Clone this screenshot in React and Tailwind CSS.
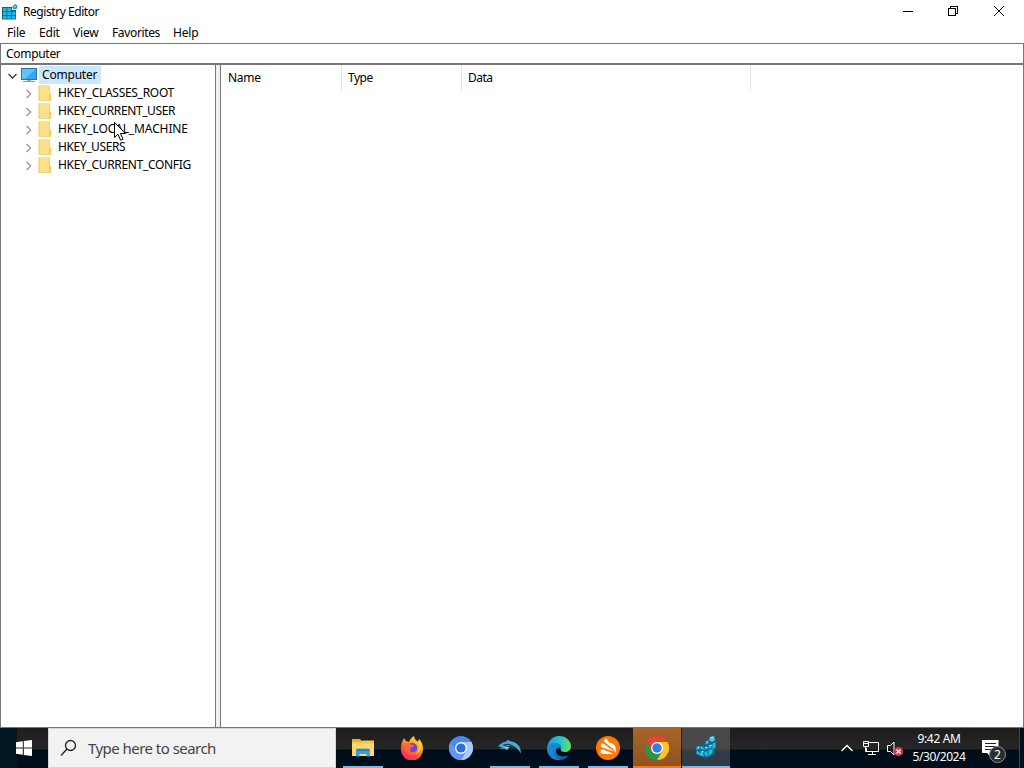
import React from 'react';

const menus = [
  { label: 'File', className: 'w-8' },
  { label: 'Edit', className: 'w-[34px]' },
  { label: 'View', className: 'w-[39px]' },
  { label: 'Favorites', className: 'w-[61px] tracking-[-0.36px]' },
  { label: 'Help', className: 'w-10' },
];

const hives = [
  { label: 'HKEY_CLASSES_ROOT', className: 'tracking-[-0.29px]' },
  { label: 'HKEY_CURRENT_USER', className: 'tracking-[-0.39px]' },
  { label: 'HKEY_LOCAL_MACHINE', className: 'tracking-[-0.12px]' },
  { label: 'HKEY_USERS', className: 'tracking-[-0.4px]' },
  { label: 'HKEY_CURRENT_CONFIG', className: 'tracking-[-0.33px]' },
];

const RegistryIcon = () => (
  <svg width="16" height="16" viewBox="0 0 16 16" className="shrink-0">
    <path d="M0 3h10v3h4v9.500H0z" fill="#12627f" />
    <path d="M1 4h3.500v3H1zM5.300 4h3.900v3H5.300zM1 7.800h3.500v3.200H1zM5.300 7.800h3.900v3.200H5.300zM10 7.800h3.400v3.200H10zM1 11.800h3.500v3H1zM5.300 11.800h3.900v3H5.300zM10 11.800h3.400v3H10z" fill="#24b4e8" />
    <path d="M12.500 0l3 1.600-.5 3-3 .9-1.800-2.200z" fill="#238fb5" />
    <path d="M12.600 1.200l1.600.9-1 1.800-1.600-.7z" fill="#7bdcf6" />
  </svg>
);

const ComputerIcon = () => (
  <svg width="18" height="16" viewBox="0 0 18 16" className="shrink-0">
    <path d="M1 1h16v12H1z" fill="#2477aa" />
    <path d="M2 2h14v10H2z" fill="#35a8ed" />
    <path d="M2 2h14L5 12H2z" fill="#62c3f7" />
    <path d="M7 13h4v1H7z" fill="#9bacb5" />
    <path d="M3 14h12v1H3z" fill="#849aa5" />
  </svg>
);

const FolderIcon = () => (
  <svg width="14" height="16" viewBox="0 0 14 16" className="shrink-0">
    <path d="M.5.500h11.500V9h1.200v6.800H.5z" fill="#e9c559" />
    <path d="M1.500 1h10v14.200h-10z" fill="#ffe08a" />
    <path d="M11 10l1.500-.8v6H10.500z" fill="#f6d264" />
  </svg>
);

const FileExplorerIcon = () => (
  <svg width="24" height="24" viewBox="0 0 24 24">
    <path d="M1 3h8l2 2h11v15H1z" fill="#e9a91c" />
    <path d="M1 7h22v13H1z" fill="#ffd970" />
    <path d="M1 5.500h9l2-1h11v3H1z" fill="#f7c64a" />
    <path d="M5 20.500V14q0-1.500 1.500-1.500h11q1.500 0 1.500 1.500v6.500h-3.500V18h-7v2.500z" fill="#3a9fd8" />
    <path d="M6 13.500h12V15H6z" fill="#237bb4" />
  </svg>
);

const FirefoxIcon = () => (
  <svg width="24" height="24" viewBox="0 0 24 24">
    <defs>
      <linearGradient id="foxBody" x1=".8" y1="0" x2=".25" y2="1">
        <stop offset="0" stopColor="#ffe63f" />
        <stop offset=".4" stopColor="#ff9a22" />
        <stop offset=".7" stopColor="#ff4a40" />
        <stop offset="1" stopColor="#ee2474" />
      </linearGradient>
    </defs>
    <path d="M2 6l2-4 2 3 3 1c1-3 3-5 5-6 0 3 2 4 4 6l1-3c3 3 4 6 4 10A11 11 0 0 1 1 14c0-3 0-5 1-8z" fill="url(#foxBody)" />
    <circle cx="12" cy="12" r="5.300" fill="#7643d8" />
    <path d="M5 8c3-2 5 0 7 1 2 0 3 1 1 2-2 0-3 1-3 3 0 3 5 3 7 0-1 5-7 6-10 3-2-2-3-5-2-9z" fill="#ff6636" />
    <path d="M14 1c0 3 3 4 4 7 2 4 0 8-3 10 5-1 7-6 6-11l-2-3-1 2c-2-1-3-2-4-5z" fill="#ffcd32" />
  </svg>
);

const ChromiumIcon = () => (
  <svg width="24" height="24" viewBox="0 0 24 24">
    <circle cx="12" cy="12" r="12" fill="#4a8af0" />
    <path d="M12 6h10.400A12 12 0 0 1 12 24l5.200-9z" fill="#a9caff" />
    <path d="M1.600 6L6.800 15A6 6 0 0 0 17.200 15L12 24A12 12 0 0 1 1.600 6z" fill="#5d98f5" />
    <circle cx="12" cy="12" r="6" fill="#f3f7ff" />
    <circle cx="12" cy="12" r="4.600" fill="#2d70db" />
  </svg>
);

const DolphinIcon = () => (
  <svg width="24" height="24" viewBox="0 0 24 24">
    <path d="M0 10.500C2 8 5 6 8 5.500L9.500 4l4 1.500c5 1 8 4 9 8l.5 4c-3-5-6-7.500-11-7.500-3 0-4 .5-6 1.500L3 11z" fill="#4aa9da" />
    <path d="M5 8.500c5-2 10 0 14 4-5-3-8-4-13-2.500z" fill="#0c4568" />
    <path d="M1.500 12.500c3-1 6-2 10-1.500l-2.500 3-2-1.500z" fill="#73cdf0" />
  </svg>
);

const EdgeIcon = () => (
  <svg width="24" height="24" viewBox="0 0 24 24">
    <defs>
      <linearGradient id="edgeTop" x1="0" y1=".5" x2="1" y2=".6">
        <stop offset="0" stopColor="#2599e8" />
        <stop offset=".5" stopColor="#25c3d0" />
        <stop offset="1" stopColor="#64df5c" />
      </linearGradient>
      <linearGradient id="edgeBase" x1="0" y1="0" x2="1" y2="1">
        <stop offset="0" stopColor="#1d9de5" />
        <stop offset="1" stopColor="#0f529e" />
      </linearGradient>
    </defs>
    <path d="M0 12C1 5 5 0 12 0c7 0 12 5 12 10 0 4-3 6-6 6-3 0-5-1-4-3 1-5-5-6-9-4-2 1-4 2-5 3z" fill="url(#edgeTop)" />
    <path d="M0 12C1 8 5 6 9 7c4 0 6 3 5 6-1-2-5-2-5 2 0 5 7 7 13 4-2 3-6 5-10 5C5 24 0 18 0 12z" fill="url(#edgeBase)" />
    <path d="M9 9c-5 3-4 12 4 14.900C6 25 0 19 0 12c2-3 6-4 9-3z" fill="#1787d4" />
  </svg>
);

const AvastIcon = () => (
  <svg width="24" height="24" viewBox="0 0 24 24">
    <circle cx="12" cy="12" r="12" fill="#ff7800" />
    <path d="M8.500 3.500q1.500-1.500 3 .5l6.500 9.500L9 6.500Q7 5 8.500 3.500zM5 8.500q1-1.500 3-.5l10 7.500L6 11.500Q4 10.500 5 8.500zM4.500 15q.5-2 2.500-1.500L18 18H7Q4 17.500 4.500 15zM13.500 6.500q5 1 6 4.500l.5 6.500z" fill="#fff" />
  </svg>
);

const ChromeIcon = () => (
  <svg width="24" height="24" viewBox="0 0 24 24">
    <circle cx="12" cy="12" r="12" fill="#ea4335" />
    <path d="M12 6h10.400A12 12 0 0 1 12 24l5.200-9z" fill="#fbc91f" />
    <path d="M1.600 6L6.800 15A6 6 0 0 0 17.200 15L12 24A12 12 0 0 1 1.600 6z" fill="#279847" />
    <circle cx="12" cy="12" r="6" fill="#fff" />
    <circle cx="12" cy="12" r="4.700" fill="#3878e8" />
  </svg>
);

const RegeditIcon = () => (
  <svg width="24" height="24" viewBox="0 0 24 24">
    <path d="M2 10l4-2 3 1 3-4 4-4 5 1 1 5-1 6v5l-8 4-7-1-4-4z" fill="#17607e" />
    <path d="M2.500 11l3-1v3l-3 1zM6.500 10l3 1v3l-3-1zM2.500 15l3 1v3l-3-1zM6.500 15l3 1v5l-3-2zM10.500 11l3-1v3l-3 1zM10.500 16l3-1v6l-3-2zM14.500 9l3-1v4l-3 1zM14.500 14l4-1v4l-4 3zM11.500 5.500l3-1v3l-3 1zM18.500 7.500l3-1v5l-3 2z" fill="#25b9e9" />
    <path d="M16 1l4-1 1 4-3 2-3-2z" fill="#45caef" />
    <path d="M4 11h1v1H4zM8 15h1.500v1H8zM12 11h1v1h-1zM16 9h1.500v1H16zM17 1h2v1h-2zM6 18h1v1H6zM12.500 5.500h1v1h-1z" fill="#b8f0ff" />
  </svg>
);

const apps = [
  { name: 'explorer', Icon: FileExplorerIcon, button: '', line: 'w-10 bg-[#76b9ed]' },
  { name: 'firefox', Icon: FirefoxIcon, button: '', line: 'w-0' },
  { name: 'chromium', Icon: ChromiumIcon, button: '', line: 'w-0' },
  { name: 'dolphin', Icon: DolphinIcon, button: '', line: 'w-10 bg-[#76b9ed]' },
  { name: 'edge', Icon: EdgeIcon, button: '', line: 'w-10 bg-[#76b9ed]' },
  { name: 'avast', Icon: AvastIcon, button: '', line: 'w-10 bg-[#76b9ed]' },
  { name: 'chrome', Icon: ChromeIcon, button: 'bg-linear-to-b from-[#a9642b] to-[#8f5222]', line: 'w-12 bg-[#ff7a08]' },
  { name: 'regedit', Icon: RegeditIcon, button: 'bg-linear-to-b from-[#484848] from-50% to-[#303b47] to-60%', line: 'w-12 bg-[#76b9ed]' },
];

const TitleBar = () => (
  <div className="flex h-[23px] items-center pl-[2px]">
    <div className="flex h-full items-center">
      <RegistryIcon />
      <span className="ml-[5px] pt-px tracking-[-0.44px]">Registry Editor</span>
    </div>
    <svg width="116" height="20" viewBox="0 0 116 20" className="mr-[10px] ml-auto" fill="none" stroke="#000" shapeRendering="crispEdges">
      <path d="M5 9.500h10" />
      <path d="M50.500 6.500h7v7h-7zM52.500 6v-1.500h7v7H58" />
      <path d="M96 4l10 10M106 4L96 14" shapeRendering="auto" />
    </svg>
  </div>
);

const Tree = () => (
  <div className="w-[216px] border-x border-[#777] bg-white pt-px">
    <div className="flex h-[18px] items-center pl-[6px]">
      <svg width="10" height="10" viewBox="0 0 10 10" fill="none" stroke="#404040" strokeWidth="1.500" className="mt-px">
        <path d="M1.500 3l4 4 4-4" />
      </svg>
      <div className="ml-[3px]"><ComputerIcon /></div>
      <span className="ml-px flex h-[18px] items-center bg-[#cce8ff] pr-[4px] pl-[3px] tracking-[-0.2px]">Computer</span>
    </div>
    {hives.map((hive) => (
      <div key={hive.label} className="flex h-[18px] items-center pl-[23px]">
        <svg width="8" height="10" viewBox="0 0 8 10" fill="none" stroke="#a0a0a0" strokeWidth="1.500" className="mt-[2px]">
          <path d="M2.500 1l4 4-4 4" />
        </svg>
        <div className="ml-[6px]"><FolderIcon /></div>
        <span className={`ml-[6px] whitespace-nowrap ${hive.className}`}>{hive.label}</span>
      </div>
    ))}
  </div>
);

const ValueList = () => (
  <div className="ml-1 flex-1 border-x border-[#777] bg-white">
    <div className="flex h-[26px] items-center">
      <div className="flex h-full w-[121px] items-center border-r border-[#e5e5e5] pl-[7px] tracking-[-0.3px]">Name</div>
      <div className="flex h-full w-[120px] items-center border-r border-[#e5e5e5] pl-[6px] tracking-[-0.5px]">Type</div>
      <div className="flex h-full w-[289px] items-center border-r border-[#e5e5e5] pl-[6px] tracking-[-0.5px]">Data</div>
    </div>
  </div>
);

const Tray = () => (
  <div className="ml-auto flex h-full items-center text-white">
    <svg width="66" height="20" viewBox="0 0 66 20" fill="none" stroke="#fff">
      <path d="M1.500 13l5.500-5.500 5.500 5.500" strokeWidth="1.400" />
      <path d="M29 4.500h9.500v9h-12V10M32.500 13.500v3M28 16.500h8" />
      <path d="M23.500 3.500h5v5h-5zM25.500 8.500v5h3" />
      <path d="M24 5.500h4" />
      <path d="M47.500 7.500h3l3.500-3.500v13l-3.500-3.500h-3z" />
      <circle cx="58.500" cy="13.500" r="4.600" fill="#d93747" stroke="none" />
      <path d="M56.500 11.500l4 4M60.500 11.500l-4 4" strokeWidth="1.400" />
    </svg>
    <div className="ml-px flex w-[64px] flex-col items-center text-[12px] leading-[18px] whitespace-nowrap">
      <span className="tracking-[-0.35px]">9:42 AM</span>
      <span className="tracking-[-0.46px]">5/30/2024</span>
    </div>
    <div className="relative ml-[11px] h-full w-[37px]">
      <svg width="20" height="20" viewBox="0 0 20 20" className="mt-[11px]">
        <path d="M0 1h16.500v13H9v4l-4-4H0z" fill="#fff" />
        <path d="M3 4.500h11M3 7.500h11M3 10.500h8" stroke="#222" />
      </svg>
      <span className="absolute top-[18px] left-[7px] flex size-[17px] items-center justify-center rounded-full border border-[#8a8d90] bg-[#272c31] text-[12px]">2</span>
    </div>
    <div className="h-full w-[5px] border-l border-[#444] bg-[#020f1c]" />
  </div>
);

const Taskbar = () => (
  <div className="flex h-10 bg-linear-to-b from-[#1d1d1d] via-[#262626] via-52% to-[#000d1a] to-56%">
    <div className="flex w-12 items-center justify-center bg-linear-to-r from-[#001720] from-35% to-transparent to-36%">
      <svg width="16" height="16" viewBox="0 0 16 16" fill="#fff">
        <path d="M0 2.200L6.800 1.200v6.300H0zM7.800 1l8.200-1v7.500H7.800zM0 8.500h6.800v6.300l-6.800-1zM7.800 8.500H16V16l-8.200-1z" />
      </svg>
    </div>
    <div className="flex w-72 items-center border border-[#d5d5d5] bg-[#f2f2f2] pl-[11px] text-[15px] text-[#444]">
      <svg width="18" height="18" viewBox="0 0 18 18" fill="none" stroke="#222" strokeWidth="1.300">
        <circle cx="10.500" cy="6.500" r="5" />
        <path d="M7 10l-6 6.500" />
      </svg>
      <span className="ml-[10px] tracking-[-0.54px]">Type here to search</span>
    </div>
    <div className="ml-[3px] flex gap-px">
      {apps.map(({ name, Icon, button, line }) => (
        <div key={name} className={`flex w-12 flex-col items-center ${button}`}>
          <div className="flex h-[38px] items-center pt-[2px]"><Icon /></div>
          <div className={`h-[2px] ${line}`} />
        </div>
      ))}
    </div>
    <Tray />
  </div>
);

const App = () => {
  return (
    <div className="relative flex h-[768px] w-[1024px] flex-col overflow-hidden bg-white font-['Noto_Sans','Open_Sans',sans-serif] text-[12px] leading-4 text-black">
      <TitleBar />
      <div className="flex h-5 items-center pl-[7px] tracking-[-0.2px]">
        {menus.map((menu) => (
          <span key={menu.label} className={menu.className}>{menu.label}</span>
        ))}
      </div>
      <div className="flex h-[22px] items-center border border-b-2 border-[#777] pl-[5px] tracking-[-0.3px]">Computer</div>
      <div className="flex h-[663px] border-b border-[#777] bg-[#f0f0f0]">
        <Tree />
        <ValueList />
      </div>
      <Taskbar />
      <svg width="13" height="20" viewBox="0 0 13 20" className="absolute top-[122px] left-[114px]">
        <path d="M.5.500v15l3.500-3.300 2.500 6 2.500-1-2.500-5.700h5z" fill="#fff" stroke="#000" />
      </svg>
    </div>
  );
};

export default App;
